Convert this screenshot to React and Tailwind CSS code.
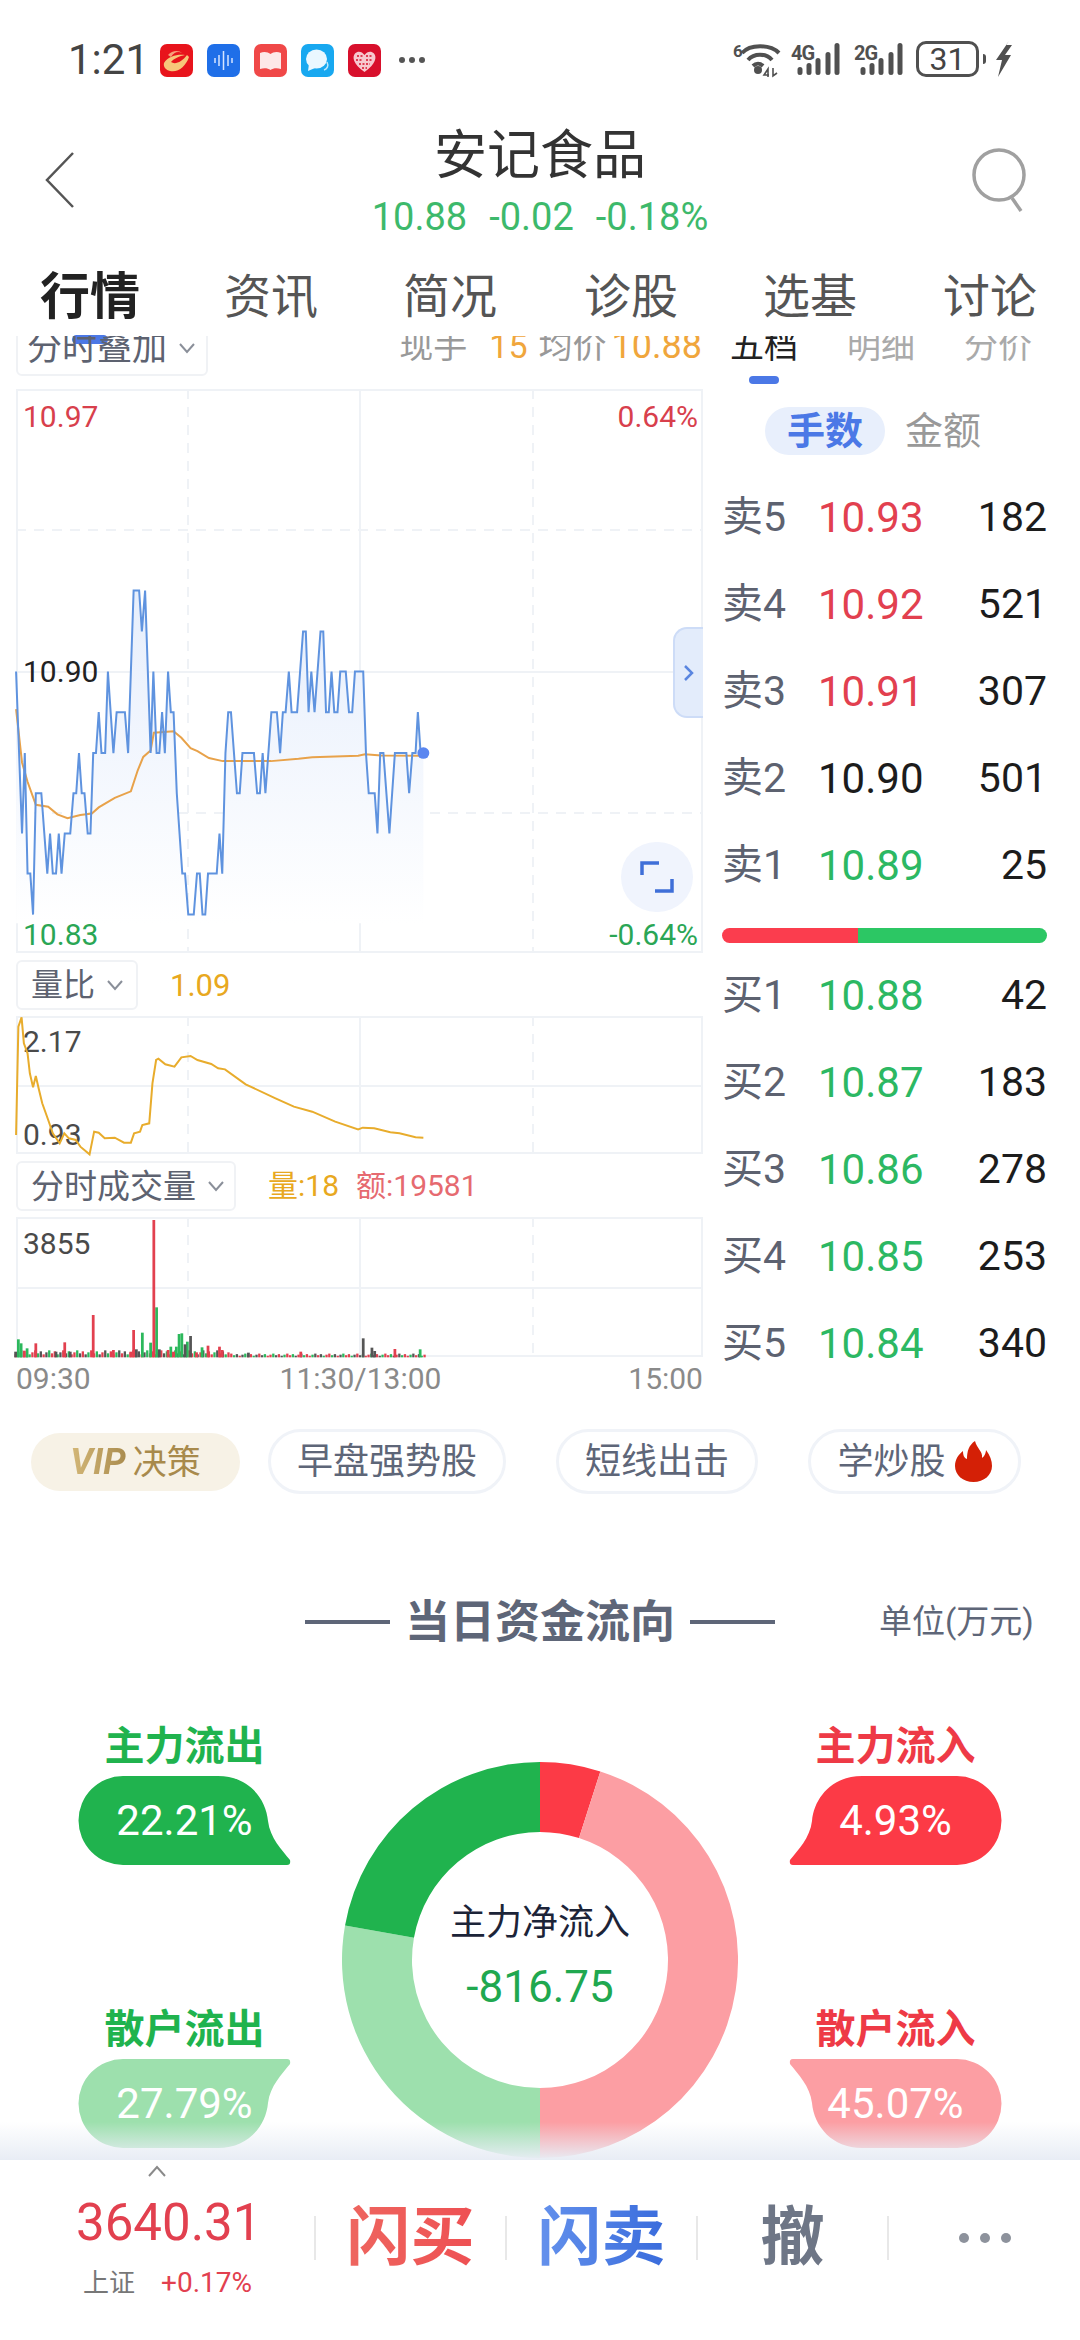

const pricePts = "35,762 48,1185 54,975 60,1290 66,1290 72,1397 78,1080 90,1080 103,1290 109,1185 115,1290 122,1290 128,1185 134,1290 141,1185 153,1185 160,1080 166,1080 172,975 178,1080 184,1080 191,1185 197,1185 203,975 209,975 215,868 221,975 229,975 235,762 247,975 254,868 272,868 279,975 291,550 303,550 309,657 316,550 328,975 334,762 341,975 347,975 353,868 359,975 366,762 372,868 378,868 385,1080 391,1185 397,1290 403,1290 410,1397 422,1397 429,1290 435,1290 441,1397 447,1397 453,1290 472,1290 478,1185 484,1290 491,975 497,868 503,868 516,1080 522,1080 528,975 534,975 553,975 560,1080 566,1080 572,975 578,1080 591,868 603,868 610,975 616,868 622,868 629,762 635,868 647,868 660,657 666,657 672,868 678,762 685,868 698,657 704,657 710,868 716,868 722,762 728,868 735,868 741,762 753,762 760,868 767,868 773,762 791,762 797,975 803,1080 816,1080 822,1185 828,975 835,975 848,1185 860,975 885,975 891,1080 898,975 905,975 910,868 916,975 922,975";
const avgPts = "35,860 48,1000 60,1050 78,1110 105,1115 125,1135 147,1145 175,1137 200,1133 215,1117 250,1092 285,1075 300,1020 312,985 328,968 335,922 378,918 395,935 415,962 430,970 455,988 485,996 590,996 650,990 680,986 780,982 795,978 830,981 922,982";
const ratioPts = "35,555 40,230 47,202 52,280 60,310 65,370 72,412 78,378 85,420 92,460 105,510 115,550 130,580 140,550 150,565 165,570 175,590 195,613 205,545 215,548 228,565 250,563 270,578 285,578 292,550 305,545 310,525 325,520 332,400 340,330 345,326 360,343 380,350 395,322 415,318 430,330 460,342 475,355 490,358 535,403 600,445 640,470 680,485 730,515 780,538 790,533 815,535 850,547 870,550 905,562 922,563";

const G = "#2cb85c", R = "#e2404f", D = "#555555";
const bigBars = [
  [40,1168,G],[46,1180,G],[59,1195,G],[310,1148,G],[328,1178,G],[341,1072,G],[372,1190,G],[384,1190,G],[390,1152,G],[396,1150,G],[408,1175,G],[440,1192,G],[915,1198,G],
  [78,1180,R],[53,1202,R],[141,1177,R],[203,1095,R],[291,1140,R],[285,1205,R],[335,810,R],[366,1200,R],[378,1205,R],[453,1187,R],[428,1207,R],[478,1190,R],[484,1200,R],[655,1205,R],[860,1197,R],[247,1200,R],
  [34,1205,D],[122,1205,D],[153,1205,D],[297,1198,D],[347,1198,D],[403,1183,D],[415,1158,D],[791,1165,D],[810,1193,D],[816,1203,D],[541,1208,D],
];
const smallBars = [];
for (let i = 0; i < 147; i++) {
  const x = 34 + i * 6.1;
  const c = [R, G, D, R, D, G, R][i % 7];
  smallBars.push([x, 1222 - (3 + (i * 7) % 5) * (x < 500 ? 3 : 1.6), c]);
}

function arc(p0, p1) {
  const cx = 198, cy = 198, ro = 198, ri = 128;
  const a0 = p0 * 0.02 * Math.PI, a1 = p1 * 0.02 * Math.PI;
  const pt = (r, a) => `${(cx + r * Math.sin(a)).toFixed(2)} ${(cy - r * Math.cos(a)).toFixed(2)}`;
  const large = p1 - p0 > 50 ? 1 : 0;
  return `M${pt(ro, a0)} A${ro} ${ro} 0 ${large} 1 ${pt(ro, a1)} L${pt(ri, a1)} A${ri} ${ri} 0 ${large} 0 ${pt(ri, a0)} Z`;
}

function Grid({ w, h, hs }) {
  return (
    <svg className="absolute inset-0 w-full h-full" viewBox={`0 0 ${w} ${h}`}>
      <rect x="1" y="1" width={w - 2} height={h - 2} fill="none" stroke="#eff2f6" strokeWidth="2" />
      <path d={`M172 0V${h}M517 0V${h}`} stroke="#eff2f6" strokeWidth="2" strokeDasharray="10 8" />
      <path d={`M344 0V${h}`} stroke="#eff2f6" strokeWidth="2" />
      {hs.map(([y, dash]) => (
        <path key={y} d={`M0 ${y}H${w}`} stroke="#eff2f6" strokeWidth="2" strokeDasharray={dash ? "10 8" : undefined} />
      ))}
    </svg>
  );
}

function Select({ label, w, size = "text-[32px]", pad = "pl-[13px]", lift = "" }) {
  return (
    <div className={`flex items-center h-[50px] ${w} border-2 border-[#f0f2f5] rounded-md ${pad} ${size} leading-none text-[#5d6270]`}>
      <span className={lift}>{label}</span>
      <svg className={`ml-[12px] ${lift}`} width="16" height="12" viewBox="0 0 16 12"><path d="M1 2l7 8 7-8" fill="none" stroke="#8a8f99" strokeWidth="2" /></svg>
    </div>
  );
}

function Row({ l, n, p, c, q }) {
  return (
    <div className="flex items-center h-[87px] text-[41px] leading-none">
      <span className="w-[96px] text-[#5d6270] flex items-center"><span>{l}</span><span>{n}</span></span>
      <span className={`w-[104px] text-[42px] ${c}`}>{p}</span>
      <span className="flex-1 text-right text-[#1c1c1c]">{q}</span>
    </div>
  );
}

function Tag({ children, w }) {
  return (
    <div className={`flex items-center justify-center h-[65px] ${w} rounded-full border-[3px] border-[#f0f3f8] text-[36px] leading-none text-[#5e6678]`}>
      {children}
    </div>
  );
}

function Bubble({ label, value, fill, color, flip, up }) {
  return (
    <div className="w-[213px] flex flex-col items-center">
      <div className={`text-[40px] leading-none font-bold ${color} h-[49px]`}>{label}</div>
      <div className="relative w-[213px] h-[89px]">
        <svg className={`absolute inset-0 ${flip ? "-scale-x-100" : ""} ${up ? "-scale-y-100" : ""}`} width="213" height="89" viewBox="0 0 213 89">
          <path d="M45 0H140C170 0 188 22 190 45C192 62 204 74 212 84Q213 89 209 89H45A44.5 44.5 0 0 1 45 0Z" fill={fill} />
        </svg>
        <div className="absolute inset-0 flex items-center justify-center text-white text-[42px] leading-none">{value}</div>
      </div>
    </div>
  );
}

function Signal({ label }) {
  return (
    <div className="relative w-[52px] h-[36px]">
      <span className="absolute left-[1px] top-[2px] text-[20px] leading-none font-bold text-[#505050] tracking-[-1px]">{label}</span>
      <svg className="absolute inset-0" width="52" height="36" viewBox="0 0 52 36">
        <g stroke="#505050" strokeWidth="5" strokeLinecap="round">
          <path d="M10 28.500v3M19 24.500v7M28 19.500v12M38 13.500v18M47 4.500v27" />
        </g>
      </svg>
    </div>
  );
}

export default function App() {
  return (
    <div className="relative w-[1080px] h-[2340px] overflow-hidden bg-white flex flex-col [font-family:Roboto,'Noto_Sans_CJK_SC',sans-serif]">
      {/* status bar */}
      <div className="h-[120px] flex items-start pt-[41px] pl-[68px] pr-[68px] shrink-0">
        <span className="text-[42px] leading-[38px] text-[#444] w-[92px]">1:21</span>
        <div className="flex items-center gap-[14px] mt-[3px]">
          <svg width="33" height="33" viewBox="0 0 33 33"><rect width="33" height="33" rx="7" fill="#e8141c" /><path d="M4 19C8 12 18 10 25 11C20 12 13 15 11 18C15 21 22 18 27 11L29 13C26 22 18 29 10 27C6 26 3 23 4 19Z" fill="#f7c77a" /><path d="M8 11C12 6 19 6 22 9C18 7 14 8 11 13Z" fill="#f7a07a" /></svg>
          <svg width="33" height="33" viewBox="0 0 33 33"><rect width="33" height="33" rx="7" fill="#1f6fe8" /><path d="M8 14v5M12 11v11M16.500 7v19M21 11v11M25 14v5" stroke="#d5e5ff" strokeWidth="1.500" /></svg>
          <svg width="33" height="33" viewBox="0 0 33 33"><rect width="33" height="33" rx="7" fill="#f04848" /><path d="M6 9C10 7 14 8 16.500 10C19 8 23 7 27 9V25C23 23.500 19 24 16.500 26C14 24 10 23.500 6 25Z" fill="#fde8e8" /></svg>
          <svg width="33" height="33" viewBox="0 0 33 33"><rect width="33" height="33" rx="7" fill="#18a8f0" /><ellipse cx="15.500" cy="15" rx="10.500" ry="9.500" fill="#eaf7ff" /><path d="M8 20l-1 7 7-3z" fill="#eaf7ff" /><path d="M26 18c2 4 0 7-3 8" fill="none" stroke="#bfe7fb" strokeWidth="1.500" /></svg>
          <svg width="33" height="33" viewBox="0 0 33 33"><rect width="33" height="33" rx="7" fill="#d8102c" /><path d="M16.500 28C5 20 4 13 7 9.500c3-3 7-2 9.500 1.500 2.500-3.500 6.500-4.500 9.500-1.500 3 3.500 2 10.500-9.500 18.500z" fill="#f7c9cf" /><path d="M9 12h6M18 12h6M8 16h7M18 16h7M11 20h11M14 24h5" stroke="#d8102c" strokeWidth="1.500" strokeDasharray="2 1.500" /></svg>
        </div>
        <svg className="ml-[17px] mt-[15px]" width="28" height="8" viewBox="0 0 28 8"><circle cx="4" cy="4" r="3" fill="#555" /><circle cx="14" cy="4" r="3" fill="#555" /><circle cx="24" cy="4" r="3" fill="#555" /></svg>
        <div className="flex-1" />
        <div className="flex items-start">
          <div className="relative w-[50px] h-[38px]">
            <span className="absolute left-0 top-[2px] text-[17px] leading-none font-bold text-[#505050]">6</span>
            <svg className="absolute inset-0" width="50" height="38" viewBox="0 0 50 38">
              <g fill="none" stroke="#505050" strokeWidth="4" strokeLinecap="butt">
                <path d="M9 12C17 3 37 3 46 12M15 19C21 12 33 12 39 19M20 25C23 22 27 22 30 25" />
              </g>
              <circle cx="25" cy="29" r="4" fill="#505050" />
              <path d="M36 34h-5l4-6v8M40 27v8l4-3" fill="none" stroke="#505050" strokeWidth="1.600" />
            </svg>
          </div>
          <div className="ml-[7px]"><Signal label="4G" /></div>
          <div className="ml-[11px]"><Signal label="2G" /></div>
          <div className="ml-[11px] flex items-center h-[36px]">
            <div className="flex items-center justify-center w-[63px] h-[36px] border-[3px] border-[#505050] rounded-[10px] text-[32px] leading-none text-[#444]">31</div>
            <div className="w-[3px] h-[10px] ml-[4px] bg-[#505050] rounded-r" />
          </div>
          <svg className="ml-[9px]" width="17" height="36" viewBox="0 0 17 36"><path d="M14 0L1 19H7L3 36L16 14H10L17 4H11Z" fill="#505050" /></svg>
        </div>
      </div>

      {/* header */}
      <div className="relative h-[128px] shrink-0 flex flex-col items-center">
        <svg className="absolute left-[44px] top-[31px]" width="32" height="58" viewBox="0 0 32 58"><path d="M29 2L3 29l26 27" fill="none" stroke="#555" strokeWidth="2.500" /></svg>
        <svg className="absolute left-[970px] top-[28px]" width="58" height="66" viewBox="0 0 58 66"><ellipse cx="29" cy="27" rx="25" ry="25" fill="none" stroke="#a0a0a0" strokeWidth="3.500" /><path d="M42 50l9 13" stroke="#a0a0a0" strokeWidth="3.500" /></svg>
        <div className="h-[64px] mt-[4px] text-[53px] leading-[64px] text-[#333]">安记食品</div>
        <div className="mt-[10px] text-[38px] leading-none text-[#3db96b] flex gap-[22px]"><span>10.88</span><span>-0.02</span><span>-0.18%</span></div>
      </div>

      {/* tabs */}
      <div className="relative h-[88px] shrink-0 flex items-start pl-[40px] pt-[24px]">
        <span className="w-[184px] text-[50px] leading-none font-bold text-[#222]">行情</span>
        <span className="w-[179px] text-[47px] leading-[50px] text-[#555]">资讯</span>
        <span className="w-[181px] text-[47px] leading-[50px] text-[#555]">简况</span>
        <span className="w-[179px] text-[47px] leading-[50px] text-[#555]">诊股</span>
        <span className="w-[180px] text-[47px] leading-[50px] text-[#555]">选基</span>
        <span className="text-[47px] leading-[50px] text-[#555]">讨论</span>
        <div className="absolute left-[72px] top-[87px] w-[36px] h-[9px] rounded-full bg-[#4b78e6]" />
      </div>

      {/* scrolled body */}
      <div className="flex-1 overflow-hidden">
        <div className="-mt-[10px]">
          <div className="flex pl-[16px]">
            {/* left column */}
            <div className="w-[687px] shrink-0">
              <div className="flex items-center h-[50px]">
                <Select label="分时叠加" w="w-[192px]" size="text-[35px]" pad="pl-[9px]" lift="-translate-y-[3px]" />
                <div className="flex-1 flex justify-end items-baseline text-[34px] leading-none text-[#999] -translate-y-[5px] pr-[1px]">
                  <span>现手</span>
                  <span className="text-[#f0a63c] ml-[22px]">15</span>
                  <span className="ml-[11px]">均价</span>
                  <span className="text-[#f0a63c] ml-[5px] text-[36px]">10.88</span>
                </div>
              </div>
              <div className="relative mt-[13px] h-[564px] text-[30px] leading-none">
                <Grid w={687} h={564} hs={[[141, true], [283, false], [424, true]]} />
                <svg className="absolute -left-[16px] -top-[9px]" width="720" height="600" viewBox="0 0 1568 1568" preserveAspectRatio="none">
                  <defs>
                    <linearGradient id="pf" x1="0" y1="0" x2="0" y2="1">
                      <stop offset="0" stopColor="#e6eefc" />
                      <stop offset="1" stopColor="#ffffff" />
                    </linearGradient>
                  </defs>
                  <polygon points={`${pricePts} 922,1420 35,1420`} fill="url(#pf)" />
                  <polyline points={avgPts} fill="none" stroke="#e8a24a" strokeWidth="2" vectorEffect="non-scaling-stroke" />
                  <polyline points={pricePts} fill="none" stroke="#5f93df" strokeWidth="2" vectorEffect="non-scaling-stroke" />
                  <ellipse cx="922" cy="975" rx="13" ry="15" fill="#5a86f0" />
                </svg>
                <span className="absolute left-[7px] top-[13px] text-[#d8404c]">10.97</span>
                <span className="absolute right-[5px] top-[13px] text-[#d8404c]">0.64%</span>
                <span className="absolute left-[7px] top-[268px] text-[#222]">10.90</span>
                <span className="absolute left-[7px] top-[531px] text-[#2aa655]">10.83</span>
                <span className="absolute right-[5px] top-[531px] text-[#2aa655]">-0.64%</span>
                <div className="absolute right-0 top-[238px] w-[30px] h-[91px] flex items-center justify-center bg-[#e3ecfb] border-2 border-r-0 border-[#cddcf7] rounded-l-[14px]">
                  <svg width="12" height="18" viewBox="0 0 12 18"><path d="M2 2l7 7-7 7" fill="none" stroke="#5a86e0" strokeWidth="2.500" /></svg>
                </div>
                <div className="absolute left-[605px] top-[453px] w-[72px] h-[70px] rounded-full bg-[#f0f4fd] flex items-center justify-center">
                  <svg width="34" height="32" viewBox="0 0 34 32"><path d="M2 14V2h17M32 18v12H15" fill="none" stroke="#3f6fd8" strokeWidth="3.500" /></svg>
                </div>
              </div>

              <div className="mt-[7px] h-[50px] flex items-center">
                <Select label="量比" w="w-[122px]" />
                <span className="ml-[32px] text-[31px] leading-none text-[#e8a820]">1.09</span>
              </div>
              <div className="relative mt-[6px] h-[138px] text-[30px] leading-none text-[#4a4a4a]">
                <Grid w={687} h={138} hs={[[70, false]]} />
                <span className="absolute left-[7px] top-[11px]">2.17</span>
                <span className="absolute left-[7px] top-[104px]">0.93</span>
                <svg className="absolute -left-[16px] -top-[66px]" width="720" height="460" viewBox="0 0 1568 1380" preserveAspectRatio="none">
                  <polyline points={ratioPts} fill="none" stroke="#e8ac2c" strokeWidth="2" vectorEffect="non-scaling-stroke" />
                </svg>
              </div>

              <div className="mt-[7px] h-[50px] flex items-center">
                <Select label="分时成交量" w="w-[220px]" size="text-[33px]" />
                <span className="ml-[32px] text-[30px] leading-none text-[#e8a820]">量:18</span>
                <span className="ml-[17px] text-[30px] leading-none text-[#e66a70]">额:19581</span>
              </div>
              <div className="relative mt-[6px] h-[140px] text-[30px] leading-none text-[#4a4a4a]">
                <Grid w={687} h={140} hs={[[71, false]]} />
                <span className="absolute left-[7px] top-[12px]">3855</span>
                <svg className="absolute -left-[16px] -top-[267px]" width="720" height="460" viewBox="0 0 1568 1380" preserveAspectRatio="none">
                  {smallBars.map(([x, t, c]) => <rect key={x} x={x - 2.500} y={t} width="5" height={1222 - t} fill={c} />)}
                  {bigBars.map(([x, t, c]) => <rect key={`${x}-${t}`} x={x - 3} y={t} width="6" height={1222 - t} fill={c} />)}
                </svg>
              </div>
              <div className="flex justify-between h-[40px] items-center text-[30px] leading-none text-[#8a8a8a] mt-[2px]">
                <span>09:30</span>
                <span className="translate-x-[1px]">11:30/13:00</span>
                <span>15:00</span>
              </div>
            </div>

            {/* right column */}
            <div className="ml-[19px] w-[325px] shrink-0">
              <div className="flex h-[50px] pt-[3px] text-[34px] leading-none text-[#aaa]">
                <span className="text-[#222] ml-[8px]">五档</span>
                <span className="ml-[49px]">明细</span>
                <span className="ml-[49px]">分价</span>
              </div>
              <div className="w-[30px] h-[8px] ml-[27px] bg-[#4b78e6] rounded-sm" />
              <div className="mt-[24px] flex items-center ml-[43px] h-[45px]">
                <div className="w-[120px] h-[48px] flex items-center justify-center rounded-full bg-[#e8effc] text-[38px] leading-none font-bold text-[#4b78e6]">手数</div>
                <span className="ml-[20px] text-[38px] leading-none text-[#999]">金额</span>
              </div>
              <div className="mt-[21px]">
                <Row l="卖" n="5" p="10.93" c="text-[#e2404f]" q="182" />
                <Row l="卖" n="4" p="10.92" c="text-[#e2404f]" q="521" />
                <Row l="卖" n="3" p="10.91" c="text-[#e2404f]" q="307" />
                <Row l="卖" n="2" p="10.90" c="text-[#1c1c1c]" q="501" />
                <Row l="卖" n="1" p="10.89" c="text-[#2cb863]" q="25" />
              </div>
              <div className="mt-[19px] h-[15px] rounded-full overflow-hidden flex">
                <div className="w-[136px] bg-[#fb3d4e]" />
                <div className="flex-1 bg-[#2cc764]" />
              </div>
              <div className="mt-[9px]">
                <Row l="买" n="1" p="10.88" c="text-[#2cb863]" q="42" />
                <Row l="买" n="2" p="10.87" c="text-[#2cb863]" q="183" />
                <Row l="买" n="3" p="10.86" c="text-[#2cb863]" q="278" />
                <Row l="买" n="4" p="10.85" c="text-[#2cb863]" q="253" />
                <Row l="买" n="5" p="10.84" c="text-[#2cb863]" q="340" />
              </div>
            </div>
          </div>

          {/* tags */}
          <div className="mt-[30px] flex items-center pl-[31px]">
            <div className="w-[209px] h-[58px] rounded-full bg-[#f7f2e6] flex items-center justify-center text-[34px] leading-none">
              <span className="italic font-bold mr-[4px] text-[36px] text-transparent bg-clip-text bg-gradient-to-r from-[#d4b878] to-[#a88a4c] pr-[3px]">VIP</span><span className="text-[#a88a4c]">决策</span>
            </div>
            <div className="ml-[28px]"><Tag w="w-[238px]">早盘强势股</Tag></div>
            <div className="ml-[50px]"><Tag w="w-[202px]">短线出击</Tag></div>
            <div className="ml-[50px]">
              <Tag w="w-[213px]">
                <span>学炒股</span>
                <svg className="ml-[9px]" width="37" height="41" viewBox="0 0 37 41"><path d="M20 0C22 8 28 10 27 17C30 15 31 11 31 9C35 14 37 20 37 25C37 34 29 41 18.500 41C8 41 0 34 0 25C0 18 4 13 8 10C8 14 9 17 12 18C12 10 14 4 20 0Z" fill="#d42006" /></svg>
              </Tag>
            </div>
          </div>

          {/* flow heading */}
          <div className="relative mt-[98px] h-[60px] flex items-center justify-center">
            <div className="flex items-center">
              <div className="w-[85px] h-[4px] bg-[#5e6678]" />
              <span className="mx-[15px] text-[45px] leading-none font-bold text-[#5e6678]">当日资金流向</span>
              <div className="w-[85px] h-[4px] bg-[#5e6678]" />
            </div>
            <span className="absolute left-[879px] top-[13px] text-[33px] leading-none text-[#5e6678]">单位(万元)</span>
          </div>

          {/* donut */}
          <div className="mt-[74px] flex justify-between px-[78px]">
            <div className="flex flex-col gap-[145px] pt-[1px]">
              <Bubble label="主力流出" value="22.21%" fill="#20b34e" color="text-[#20b34e]" />
              <Bubble label="散户流出" value="27.79%" fill="#9de0ad" color="text-[#20b34e]" up />
            </div>
            <div className="relative w-[396px] h-[396px] mt-[36px]">
              <svg className="absolute inset-0" width="396" height="396" viewBox="0 0 396 396">
                <path d={arc(0, 4.93)} fill="#fc3a46" />
                <path d={arc(4.93, 50)} fill="#fc9ea3" />
                <path d={arc(50, 77.79)} fill="#9de0ad" />
                <path d={arc(77.79, 100)} fill="#20b34e" />
              </svg>
              <div className="absolute inset-0 flex flex-col items-center justify-center -translate-y-[3px]">
                <span className="text-[36px] leading-none text-[#1c2438]">主力净流入</span>
                <span className="mt-[24px] text-[44px] leading-none text-[#20a84f]">-816.75</span>
              </div>
            </div>
            <div className="flex flex-col gap-[145px] pt-[1px]">
              <Bubble label="主力流入" value="4.93%" fill="#fc3a46" color="text-[#ee3a46]" flip />
              <Bubble label="散户流入" value="45.07%" fill="#fc9ea3" color="text-[#ee3a46]" flip up />
            </div>
          </div>
        </div>
      </div>

      {/* bottom fade */}
      <div className="absolute left-0 right-0 bottom-[180px] h-[38px] bg-gradient-to-b from-[#ffffff00] to-[#e8edf5]" />

      {/* bottom bar */}
      <div className="relative h-[180px] shrink-0 bg-white flex items-start">
        <svg className="absolute left-[148px] top-[5px]" width="18" height="12" viewBox="0 0 18 12"><path d="M1 11l8-9 8 9" fill="none" stroke="#8a8a8a" strokeWidth="2" /></svg>
        <div className="w-[314px] pl-[76px] pt-[37px]">
          <div className="text-[51px] leading-[52px] text-[#e2404f]">3640.31</div>
          <div className="mt-[20px] flex items-center leading-none">
            <span className="ml-[7px] text-[26px] text-[#777]">上证</span>
            <span className="ml-[26px] text-[28px] text-[#e2404f]">+0.17%</span>
          </div>
        </div>
        <div className="flex items-center mt-[45px]">
          <div className="w-[2px] h-[44px] bg-[#e8e8e8]" />
          <div className="w-[189px] h-[66px] flex items-center justify-center text-[64px] leading-none font-bold text-transparent bg-clip-text bg-gradient-to-r from-[#ee6a62] to-[#ee4a50]">闪买</div>
          <div className="w-[2px] h-[44px] bg-[#e8e8e8]" />
          <div className="w-[189px] h-[66px] flex items-center justify-center text-[64px] leading-none font-bold text-transparent bg-clip-text bg-gradient-to-r from-[#6f9af0] to-[#2f62d8]">闪卖</div>
          <div className="w-[2px] h-[44px] bg-[#e8e8e8]" />
          <div className="w-[189px] h-[66px] flex items-center justify-center text-[64px] leading-none font-bold text-[#6e7686]">撤</div>
          <div className="w-[2px] h-[44px] bg-[#e8e8e8]" />
          <div className="w-[191px] flex items-center justify-center">
            <svg width="54" height="12" viewBox="0 0 54 12"><circle cx="6" cy="6" r="5" fill="#8d929c" /><circle cx="27" cy="6" r="5" fill="#8d929c" /><circle cx="48" cy="6" r="5" fill="#8d929c" /></svg>
          </div>
        </div>
      </div>
    </div>
  );
}
